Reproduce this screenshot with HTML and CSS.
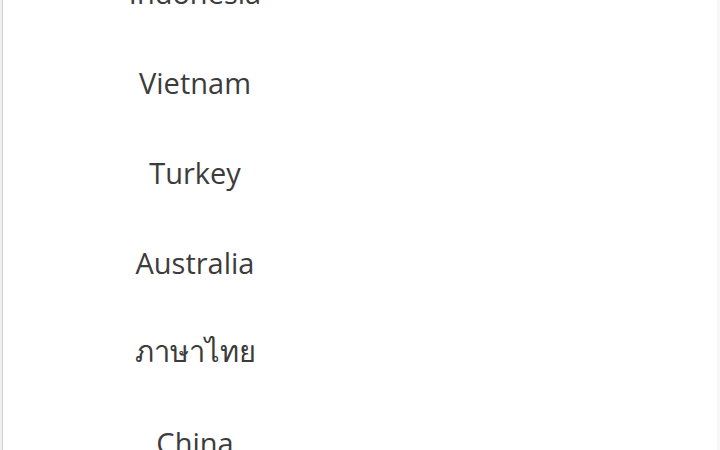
FILE: index.html
```html
<!DOCTYPE html>
<html lang="en">
<head>
<meta charset="utf-8">
<link rel="stylesheet" href="styles.css">
</head>
<body>
<div class="frame">
  <div class="panel">
    <ul class="countries">
      <li>Indonesia</li>
      <li>Vietnam</li>
      <li>Turkey</li>
      <li>Australia</li>
      <li lang="th">ภาษาไทย</li>
      <li>China</li>
    </ul>
  </div>
</div>
</body>
</html>
```
FILE: styles.css
```css
html, body {
  margin: 0;
  padding: 0;
  height: 100%;
  overflow: hidden;
  background: #ffffff;
}
.frame {
  height: 100%;
  display: flex;
  padding-left: 2px;
  background: #f0f0f0;
}
.panel {
  flex: 1;
  background: #ffffff;
  border-left: 1px solid #cfcfcf;
  border-right: 3px solid #f7f7f7;
  overflow: hidden;
}
.countries {
  list-style: none;
  margin: -53px 0 0 0;
  padding: 0;
  width: 384px;
  font-family: "Open Sans", "Noto Sans", sans-serif;
  font-size: 29px;
  color: #3c3c3c;
}
.countries li {
  height: 90px;
  display: flex;
  align-items: center;
  justify-content: center;
}
```
